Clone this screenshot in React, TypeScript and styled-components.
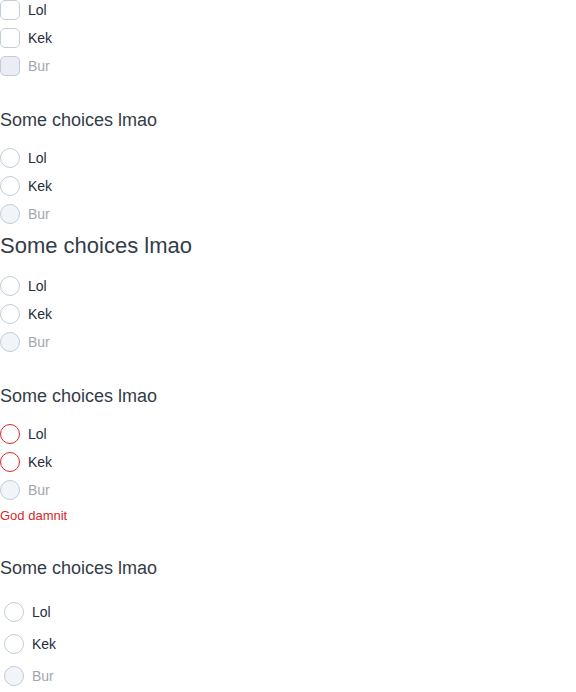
import styled, { createGlobalStyle } from "styled-components";

const GlobalStyle = createGlobalStyle`
  html, body {
    margin: 0;
    padding: 0;
    background: #ffffff;
  }
  body {
    font-family: "Liberation Sans", Arial, sans-serif;
    color: #1f2d3d;
  }
`;

type Option = { label: string; disabled?: boolean };

const options: Option[] = [
  { label: "Lol" },
  { label: "Kek" },
  { label: "Bur", disabled: true },
];

export default function App() {
  return (
    <>
      <GlobalStyle />
      <Page>
        <Group>
          {options.map(({ label, disabled }) => (
            <Row key={label} $disabled={disabled}>
              <Box $disabled={disabled} />
              {label}
            </Row>
          ))}
        </Group>

        <Fieldset $top={32}>
          <Legend>Some choices lmao</Legend>
          <Group>
            {options.map(({ label, disabled }) => (
              <Row key={label} $disabled={disabled}>
                <Circle $disabled={disabled} />
                {label}
              </Row>
            ))}
          </Group>
        </Fieldset>

        <Fieldset $top={8}>
          <BigLegend>Some choices lmao</BigLegend>
          <Group>
            {options.map(({ label, disabled }) => (
              <Row key={label} $disabled={disabled}>
                <Circle $disabled={disabled} />
                {label}
              </Row>
            ))}
          </Group>
        </Fieldset>

        <Fieldset $top={32}>
          <Legend>Some choices lmao</Legend>
          <Group>
            {options.map(({ label, disabled }) => (
              <Row key={label} $disabled={disabled}>
                <Circle $disabled={disabled} $error={!disabled} />
                {label}
              </Row>
            ))}
          </Group>
          <ErrorText>God damnit</ErrorText>
        </Fieldset>

        <Fieldset $top={32}>
          <Legend $below={22}>Some choices lmao</Legend>
          <SpacedGroup>
            {options.map(({ label, disabled }) => (
              <Row key={label} $disabled={disabled}>
                <Circle $disabled={disabled} />
                {label}
              </Row>
            ))}
          </SpacedGroup>
        </Fieldset>
      </Page>
    </>
  );
}

const Page = styled.div`
  display: flex;
  flex-direction: column;
`;

const Fieldset = styled.div<{ $top: number }>`
  display: flex;
  flex-direction: column;
  margin-top: ${(p) => p.$top}px;
`;

const Legend = styled.div<{ $below?: number }>`
  font-size: 18px;
  line-height: 24px;
  color: #333c48;
  margin-bottom: ${(p) => p.$below ?? 16}px;
`;

const BigLegend = styled(Legend)`
  font-size: 22px;
  line-height: 28px;
`;

const Group = styled.div`
  display: flex;
  flex-direction: column;
  gap: 8px;
`;

const SpacedGroup = styled(Group)`
  padding-left: 4px;
  gap: 12px;
`;

const Row = styled.label<{ $disabled?: boolean }>`
  display: flex;
  align-items: center;
  gap: 8px;
  height: 20px;
  font-size: 14px;
  color: ${(p) => (p.$disabled ? "#a2a7ae" : "#1f2d3d")};
  cursor: ${(p) => (p.$disabled ? "not-allowed" : "pointer")};
`;

const Box = styled.span<{ $disabled?: boolean }>`
  box-sizing: border-box;
  width: 20px;
  height: 20px;
  border: 1px solid #c0ccda;
  border-radius: 5px;
  background: ${(p) => (p.$disabled ? "#eaeef4" : "#ffffff")};
`;

const Circle = styled.span<{ $disabled?: boolean; $error?: boolean }>`
  box-sizing: border-box;
  width: 20px;
  height: 20px;
  border: 1px solid ${(p) => (p.$error ? "#e0262b" : "#c0ccda")};
  border-radius: 50%;
  background: ${(p) => (p.$disabled ? "#f1f4f8" : "#ffffff")};
`;

const ErrorText = styled.div`
  font-size: 13px;
  line-height: 16px;
  margin-top: 8px;
  color: #d9262c;
`;
